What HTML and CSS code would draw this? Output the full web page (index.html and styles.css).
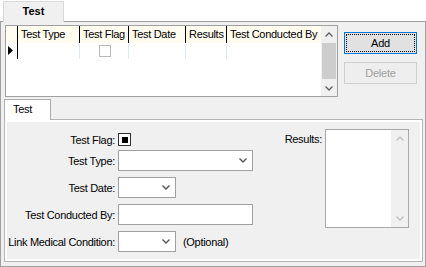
FILE: index.html
```html
<!DOCTYPE html>
<html lang="en">
<head>
    <meta charset="UTF-8">
    <title>Test</title>
    <link rel="stylesheet" href="styles.css">
</head>
<body>
<!-- Верхняя вкладка -->
<div class="tabs-top">
    <div class="tab-top">Test</div>
</div>

<div class="frame">
    <div class="top-row">
        <!-- Таблица -->
        <div class="grid">
            <div class="grid-body">
                <div class="grid-head">
                    <div class="cell rh"></div>
                    <div class="cell c1">Test Type</div>
                    <div class="cell c2">Test Flag</div>
                    <div class="cell c3">Test Date</div>
                    <div class="cell c4">Results</div>
                    <div class="cell c5">Test Conducted By</div>
                </div>
                <div class="grid-row">
                    <div class="cell rh">
                        <svg width="5" height="9" viewBox="0 0 5 9"><path d="M0 0 L5 4.5 L0 9 Z" fill="#000"/></svg>
                    </div>
                    <div class="cell c1"></div>
                    <div class="cell c2"><span class="gcheck"></span></div>
                    <div class="cell c3"></div>
                    <div class="cell c4"></div>
                    <div class="cell c5"></div>
                </div>
            </div>
            <div class="vscroll">
                <div class="sarrow">
                    <svg width="8" height="5" viewBox="0 0 8 5"><path d="M0.5 4.5 L4 1 L7.5 4.5" fill="none" stroke="#606060" stroke-width="1.3"/></svg>
                </div>
                <div class="thumb"></div>
                <div class="sarrow">
                    <svg width="8" height="5" viewBox="0 0 8 5"><path d="M0.5 0.5 L4 4 L7.5 0.5" fill="none" stroke="#606060" stroke-width="1.3"/></svg>
                </div>
            </div>
        </div>

        <!-- Кнопки -->
        <div class="buttons">
            <button class="btn btn-add"><span>Add</span></button>
            <button class="btn" disabled>Delete</button>
        </div>
    </div>

    <!-- Нижняя вкладка -->
    <div class="tabs-inner">
        <div class="tab-inner">Test</div>
    </div>
    <div class="page">
        <div class="panel">
            <div class="form">
                <div class="row row-flag">
                    <span class="label">Test Flag:</span>
                    <span class="check"><span class="check-mark"></span></span>
                </div>
                <div class="row">
                    <span class="label">Test Type:</span>
                    <div class="combo wide">
                        <svg width="8" height="5" viewBox="0 0 8 5"><path d="M0.5 0.5 L4 4 L7.5 0.5" fill="none" stroke="#555" stroke-width="1.4"/></svg>
                    </div>
                </div>
                <div class="row">
                    <span class="label">Test Date:</span>
                    <div class="combo narrow">
                        <svg width="8" height="5" viewBox="0 0 8 5"><path d="M0.5 0.5 L4 4 L7.5 0.5" fill="none" stroke="#555" stroke-width="1.4"/></svg>
                    </div>
                </div>
                <div class="row">
                    <span class="label">Test Conducted By:</span>
                    <div class="textbox"></div>
                </div>
                <div class="row">
                    <span class="label">Link Medical Condition:</span>
                    <div class="combo narrow">
                        <svg width="8" height="5" viewBox="0 0 8 5"><path d="M0.5 0.5 L4 4 L7.5 0.5" fill="none" stroke="#555" stroke-width="1.4"/></svg>
                    </div>
                    <span class="hint">(Optional)</span>
                </div>
            </div>

            <div class="results">
                <span class="label results-label">Results:</span>
                <div class="memo">
                    <div class="memo-scroll">
                        <svg width="8" height="5" viewBox="0 0 8 5"><path d="M0.5 4.5 L4 1 L7.5 4.5" fill="none" stroke="#c0c0c0" stroke-width="1.3"/></svg>
                        <svg width="8" height="5" viewBox="0 0 8 5"><path d="M0.5 0.5 L4 4 L7.5 0.5" fill="none" stroke="#c0c0c0" stroke-width="1.3"/></svg>
                    </div>
                </div>
            </div>
        </div>
    </div>
</div>
</body>
</html>
```

FILE: styles.css
```css
* {
    box-sizing: border-box;
}

body {
    margin: 0;
    width: 426px;
    height: 267px;
    overflow: hidden;
    background: #fff;
    font-family: "Liberation Sans", Arial, sans-serif;
    font-size: 11px;
    letter-spacing: -0.3px;
    color: #000;
}

/* Верхняя вкладка */
.tabs-top {
    display: flex;
    height: 21px;
    padding: 1px 0 0 3px;
}

.tab-top {
    position: relative;
    z-index: 1;
    width: 61px;
    height: 21px;
    border: 1px solid #d9d9d9;
    border-bottom: none;
    background: #f0f0f0;
    font-weight: bold;
    letter-spacing: 0;
    text-align: center;
    line-height: 19px;
}

.frame {
    height: 246px;
    border: 1px solid #a0a0a0;
    background: #f0f0f0;
    padding: 3px 2px 4px 3px;
}

.top-row {
    display: flex;
    align-items: flex-start;
}

/* Таблица */
.grid {
    display: flex;
    width: 333px;
    height: 72px;
    margin-left: 1px;
    border: 1px solid #a0a0a0;
    background: #fff;
}

.grid-body {
    flex: 1;
}

.grid-head,
.grid-row {
    display: flex;
}

.grid-head {
    height: 17px;
    background: #fffcf0;
}

.grid-row {
    height: 16px;
}

.cell {
    height: 100%;
    padding-left: 3px;
    line-height: 17px;
    white-space: nowrap;
    overflow: hidden;
    border-right: 1px solid #000;
}

.grid-row .cell {
    border-right-color: #dfe9f4;
}

.grid-row .cell.rh {
    border-right-color: #000;
}

.rh { width: 12px; }
.c1 { width: 62px; }
.c2 { width: 49px; }
.c3 { width: 57px; }
.c4 { width: 41px; }
.c5 { width: 94px; border-right: none; }

.grid-row .rh {
    padding: 3px 0 0 2px;
}

.grid-row .rh svg {
    display: block;
}

.grid-row .c2 {
    display: flex;
    justify-content: center;
    align-items: center;
    padding-left: 0;
}

.gcheck {
    width: 12px;
    height: 12px;
    margin-left: 2px;
    border: 1px solid #b8b8b8;
    background: #fff;
}

.vscroll {
    display: flex;
    flex-direction: column;
    align-items: center;
    width: 16px;
    background: #f0f0f0;
}

.sarrow {
    display: flex;
    align-items: center;
    justify-content: center;
    height: 16px;
}

.thumb {
    flex: 1;
    width: 14px;
    margin: 1px 0;
    background: #cdcdcd;
}

/* Кнопки */
.buttons {
    display: flex;
    flex-direction: column;
    gap: 8px;
    margin: 7px 0 0 6px;
}

.btn {
    width: 73px;
    height: 22px;
    padding: 0;
    font-family: inherit;
    font-size: 11px;
    letter-spacing: -0.2px;
    color: #000;
    background: #e1e1e1;
    border: 1px solid #adadad;
}

.btn-add {
    border-color: #0078d7;
    outline: 1px dotted #000;
    outline-offset: -3px;
}

.btn:disabled {
    color: #a0a0a0;
    background: #eeeeee;
    border-color: #cfcfcf;
}

/* Нижняя вкладка */
.tabs-inner {
    display: flex;
    margin-top: 2px;
}

.tab-inner {
    position: relative;
    z-index: 1;
    width: 47px;
    height: 21px;
    margin-bottom: -1px;
    padding-left: 8px;
    border: 1px solid #adadad;
    border-bottom: none;
    background: #fff;
    line-height: 19px;
}

.page {
    height: 143px;
    border: 1px solid #b4b4b4;
    background: #fff;
    padding: 2px;
}

.panel {
    display: flex;
    height: 100%;
    padding: 7px 11px 0 0;
    background: #f0f0f0;
}

.form {
    display: flex;
    flex-direction: column;
    gap: 6px;
    margin-top: 4px;
}

.row {
    display: flex;
    align-items: center;
    height: 21px;
}

.row-flag {
    height: 13px;
    margin-bottom: -2px;
}

.label {
    width: 108px;
    margin-right: 3px;
    text-align: right;
    white-space: nowrap;
}

.check {
    display: flex;
    align-items: center;
    justify-content: center;
    width: 13px;
    height: 13px;
    border: 1px solid #333;
    background: #fff;
}

.check-mark {
    width: 6px;
    height: 6px;
    background: #000;
}

.combo,
.textbox {
    height: 21px;
    border: 1px solid #a0a0a0;
    background: #fff;
}

.combo {
    display: flex;
    align-items: center;
    justify-content: flex-end;
    padding-right: 5px;
}

.wide {
    width: 135px;
}

.narrow {
    width: 58px;
}

.textbox {
    width: 135px;
}

.hint {
    margin-left: 7px;
}

/* Поле результатов */
.results {
    display: flex;
    align-items: flex-start;
    margin-left: auto;
}

.results-label {
    width: auto;
    margin-top: 4px;
}

.memo {
    display: flex;
    justify-content: flex-end;
    width: 84px;
    height: 99px;
    border: 1px solid #a8a8a8;
    background: #fff;
}

.memo-scroll {
    display: flex;
    flex-direction: column;
    justify-content: space-between;
    align-items: center;
    width: 17px;
    padding: 6px 0 6px;
    background: #f0f0f0;
}
```
